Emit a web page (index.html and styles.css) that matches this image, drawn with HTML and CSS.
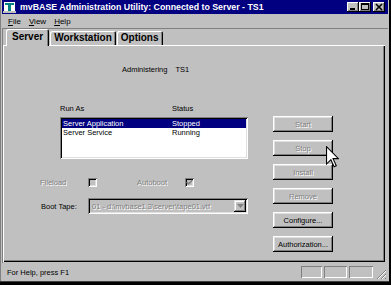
FILE: index.html
```html
<!DOCTYPE html>
<html lang="en">
<head>
    <meta charset="UTF-8">
    <title>mvBASE Administration Utility</title>
    <link rel="stylesheet" href="styles.css">
</head>
<body>
<div class="window">
    <!-- title bar -->
    <div class="titlebar">
        <svg class="app-icon" width="14" height="12" viewBox="0 0 14 12">
            <rect x="1" y="1" width="11" height="9" fill="#ffffff"/>
            <rect x="2" y="2" width="9" height="2" fill="#008080"/>
            <rect x="5" y="4" width="3" height="6" fill="#008080"/>
            <rect x="0" y="10" width="13" height="2" fill="#c0c0c0"/>
        </svg>
        <span class="title">mvBASE Administration Utility: Connected to Server - TS1</span>
        <div class="caption-buttons">
            <span class="cap-btn">
                <svg width="12" height="10" viewBox="0 0 12 10"><rect x="3" y="6" width="5" height="2" fill="#000"/></svg>
            </span>
            <span class="cap-btn">
                <svg width="12" height="10" viewBox="0 0 12 10"><rect x="2.5" y="1.5" width="7" height="6" fill="none" stroke="#000"/><rect x="2" y="1" width="8" height="2" fill="#000"/></svg>
            </span>
            <span class="cap-btn close">
                <svg width="12" height="10" viewBox="0 0 12 10"><path d="M3 2 L9 8 M9 2 L3 8" stroke="#000" stroke-width="1.6"/></svg>
            </span>
        </div>
    </div>

    <!-- menu -->
    <div class="menubar">
        <span class="menu-item"><u>F</u>ile</span>
        <span class="menu-item"><u>V</u>iew</span>
        <span class="menu-item"><u>H</u>elp</span>
    </div>

    <div class="client">
        <div class="tabs">
            <div class="tab active">Server</div>
            <div class="tab">Workstation</div>
            <div class="tab">Options</div>
        </div>

        <div class="panel">
            <div class="main">
                <div class="admin-row">
                    <span>Administering</span>
                    <span>TS1</span>
                </div>

                <div class="list-header">
                    <span class="col-name">Run As</span>
                    <span>Status</span>
                </div>
                <div class="listbox">
                    <div class="list-row selected">
                        <span class="col-name">Server Application</span>
                        <span>Stopped</span>
                    </div>
                    <div class="list-row">
                        <span class="col-name">Server Service</span>
                        <span>Running</span>
                    </div>
                </div>

                <div class="check-row">
                    <span class="check-label disabled">Fileload</span>
                    <span class="checkbox"></span>
                    <span class="check-label disabled autoboot">Autoboot</span>
                    <span class="checkbox">
                        <svg width="7" height="7" viewBox="0 0 7 7"><path d="M0.5 3 L2.5 5 L6.5 1" fill="none" stroke="#808080" stroke-width="1.5"/></svg>
                    </span>
                </div>

                <div class="tape-row">
                    <span class="tape-label">Boot Tape:</span>
                    <div class="combo">
                        <span class="combo-text disabled">01 - d:\mvbase1.3\server\tape01.vtf</span>
                        <span class="combo-btn">
                            <svg width="7" height="4" viewBox="0 0 7 4"><path d="M0 0 L7 0 L3.5 4 Z" fill="#808080"/></svg>
                        </span>
                    </div>
                </div>
            </div>

            <div class="buttons">
                <button class="btn" disabled>Start</button>
                <button class="btn" disabled>Stop</button>
                <button class="btn" disabled>Install</button>
                <button class="btn" disabled>Remove</button>
                <button class="btn">Configure...</button>
                <button class="btn">Authorization...</button>
            </div>
        </div>
    </div>

    <!-- status bar -->
    <div class="statusbar">
        <span class="status-text">For Help, press F1</span>
        <span class="status-pane w1"></span>
        <span class="status-pane w2"></span>
        <span class="status-pane w3"></span>
        <svg class="grip" width="12" height="12" viewBox="0 0 12 12">
            <path d="M11 2 L2 11 M11 6 L6 11 M11 10 L10 11" stroke="#808080" stroke-width="1"/>
            <path d="M11 3 L3 11 M11 7 L7 11" stroke="#ffffff" stroke-width="1"/>
        </svg>
    </div>

    <!-- mouse pointer over the Stop button -->
    <svg class="cursor" width="13" height="22" viewBox="0 0 12 20">
        <path d="M0.5 0.5 L0.5 16.5 L4.5 12.5 L7.5 19 L9.5 18 L6.5 11.5 L11.5 11.5 Z" fill="#ffffff" stroke="#000000" stroke-width="1"/>
    </svg>
</div>
</body>
</html>
```

FILE: styles.css
```css
* {
    box-sizing: border-box;
    margin: 0;
    padding: 0;
}
body {
    font-family: "Liberation Sans", Arial, sans-serif;
    font-size: 7.5px;
    color: #000;
    background-color: #c0c0c0;
}
.window {
    position: relative;
    width: 391px;
    height: 285px;
    padding: 0 3px 4px 2px;
    display: flex;
    flex-direction: column;
    background: #c0c0c0;
    box-shadow: inset 0 -3px #000, inset -2px 0 #000, inset 0 -4px #404040, inset 1px 0 #808080;
}

/* title bar */
.titlebar {
    height: 14px;
    background: #000080;
    color: #fff;
    display: flex;
    align-items: center;
    padding-left: 1px;
}
.app-icon {
    flex-shrink: 0;
}
.title {
    margin-left: 3px;
    font-size: 8.8px;
    font-weight: bold;
    white-space: nowrap;
}
.caption-buttons {
    margin-left: auto;
    margin-right: 3px;
    display: flex;
}
.cap-btn {
    width: 12px;
    height: 10px;
    background: #c0c0c0;
    box-shadow: inset -1px -1px #000, inset 1px 1px #fff, inset -2px -2px #808080;
    display: flex;
}
.cap-btn.close {
    margin-left: 2px;
}

/* menu */
.menubar {
    height: 14px;
    display: flex;
    align-items: center;
    gap: 8px;
    padding-left: 6px;
    font-size: 8px;
}
.menu-item u {
    text-decoration: underline;
}

/* client area with tabs */
.client {
    flex: 1;
    border-top: 1px solid #808080;
    border-left: 1px solid #808080;
    display: flex;
    flex-direction: column;
}
.tabs {
    height: 16px;
    display: flex;
    align-items: flex-end;
    padding-left: 3px;
    position: relative;
    z-index: 1;
}
.tab {
    height: 14px;
    padding: 0 4px;
    margin-left: 1px;
    font-size: 10px;
    font-weight: bold;
    line-height: 14px;
    background: #c0c0c0;
    border-radius: 2px 2px 0 0;
    box-shadow: inset 1px 1px #fff, inset -1px 0 #000, inset -2px 0 #808080;
}
.tab.active {
    height: 17px;
    margin-bottom: -1px;
    margin-left: 0;
    padding: 0 6px 0 6px;
    line-height: 15px;
    box-shadow: inset 1px 1px #fff, inset -1px 0 #000, inset -2px 0 #808080;
}
.panel {
    height: 217px;
    margin-right: 3px;
    display: flex;
    box-shadow: inset 1px 1px #fff, inset -1px -1px #000, inset -2px -2px #808080;
}

/* left part of the panel */
.main {
    width: 208px;
    margin-left: 37px;
    display: flex;
    flex-direction: column;
}
.admin-row {
    margin-top: 20px;
    height: 10px;
    line-height: 10px;
    padding-left: 82px;
    display: flex;
    gap: 8px;
}
.list-header {
    margin-top: 29px;
    height: 10px;
    line-height: 10px;
    padding-left: 20px;
    display: flex;
}
.list-header .col-name {
    width: 112px;
}
.listbox {
    margin: 3px 0 0 20px;
    width: 188px;
    height: 42px;
    padding: 2px;
    background: #fff;
    box-shadow: inset 1px 1px #808080, inset -1px -1px #fff, inset 2px 2px #000, inset -2px -2px #dfdfdf;
}
.list-row {
    height: 9px;
    line-height: 9px;
    padding-left: 1px;
    display: flex;
}
.list-row .col-name {
    width: 109px;
}
.list-row.selected {
    background: #000080;
    color: #fff;
}
.disabled {
    color: #808080;
    text-shadow: 1px 1px #fff;
}
.check-row {
    margin-top: 18px;
    height: 11px;
    display: flex;
    align-items: center;
}
.check-label {
    width: 48px;
}
.check-label.autoboot {
    margin-left: 40px;
}
.checkbox {
    width: 9px;
    height: 9px;
    background: #c0c0c0;
    display: flex;
    align-items: center;
    justify-content: center;
    box-shadow: inset 1px 1px #808080, inset -1px -1px #fff, inset 2px 2px #000, inset -2px -2px #dfdfdf;
}
.tape-row {
    margin-top: 10px;
    display: flex;
    align-items: center;
}
.tape-label {
    width: 48px;
    padding-left: 1px;
}
.combo {
    width: 160px;
    height: 16px;
    padding: 2px;
    display: flex;
    align-items: center;
    box-shadow: inset 1px 1px #808080, inset -1px -1px #fff, inset 2px 2px #000, inset -2px -2px #dfdfdf;
}
.combo-text {
    flex: 1;
    padding-left: 2px;
    white-space: nowrap;
}
.combo-btn {
    width: 12px;
    height: 12px;
    display: flex;
    align-items: center;
    justify-content: center;
    box-shadow: inset -1px -1px #000, inset 1px 1px #dfdfdf, inset -2px -2px #808080, inset 2px 2px #fff;
}

/* right column of buttons */
.buttons {
    margin: 71px 0 0 25px;
    display: flex;
    flex-direction: column;
    gap: 8px;
}
.btn {
    width: 60px;
    height: 16px;
    background: #c0c0c0;
    border: none;
    font-family: inherit;
    font-size: 7.5px;
    color: #000;
    box-shadow: inset -1px -1px #000, inset 1px 1px #fff, inset -2px -2px #808080, inset 2px 2px #dfdfdf;
}
.btn:disabled {
    color: #808080;
    text-shadow: 1px 1px #fff;
}

/* status bar */
.statusbar {
    height: 18px;
    display: flex;
    align-items: center;
    gap: 2px;
    padding-right: 1px;
}
.status-text {
    padding-left: 5px;
    margin-right: auto;
}
.status-pane {
    height: 12px;
    box-shadow: inset 1px 1px #808080, inset -1px -1px #fff;
}
.w1 {
    width: 21px;
}
.w2 {
    width: 23px;
}
.w3 {
    width: 24px;
}
.grip {
    align-self: flex-end;
    margin-bottom: 1px;
}

.cursor {
    position: absolute;
    left: 326px;
    top: 146px;
}
```
